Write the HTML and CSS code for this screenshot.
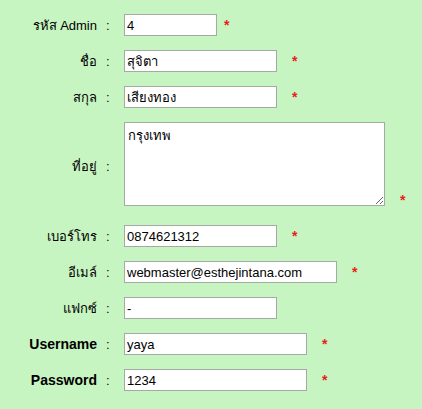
FILE: index.html
```html
<!DOCTYPE html>
<html>
<head>
<meta charset="utf-8">
<link rel="stylesheet" href="styles.css">
</head>
<body>
<form class="form">
  <div class="label">รหัส Admin</div><div class="colon">:</div>
  <div class="field"><input class="in w93" type="text" value="4"><span class="star star-near">*</span></div>

  <div class="label">ชื่อ</div><div class="colon">:</div>
  <div class="field"><input class="in w153" type="text" value="สุจิตา"><span class="star">*</span></div>

  <div class="label">สกุล</div><div class="colon">:</div>
  <div class="field"><input class="in w153" type="text" value="เสียงทอง"><span class="star">*</span></div>

  <div class="label">ที่อยู่</div><div class="colon">:</div>
  <div class="field field-area"><textarea class="area">กรุงเทพ</textarea><span class="star star-bottom">*</span></div>

  <div class="label">เบอร์โทร</div><div class="colon">:</div>
  <div class="field"><input class="in w153" type="text" value="0874621312"><span class="star">*</span></div>

  <div class="label">อีเมล์</div><div class="colon">:</div>
  <div class="field"><input class="in w213" type="text" value="webmaster@esthejintana.com"><span class="star">*</span></div>

  <div class="label">แฟกซ์</div><div class="colon">:</div>
  <div class="field"><input class="in w153" type="text" value="-"></div>

  <div class="label bold">Username</div><div class="colon">:</div>
  <div class="field"><input class="in w183" type="text" value="yaya"><span class="star">*</span></div>

  <div class="label bold">Password</div><div class="colon">:</div>
  <div class="field"><input class="in w183" type="text" value="1234"><span class="star">*</span></div>
</form>
</body>
</html>
```
FILE: styles.css
```css
html, body {
  margin: 0;
  padding: 0;
  background: #c7f5c1;
}
body {
  padding-top: 14px;
  font-family: "Liberation Sans", Arial, sans-serif;
  font-size: 13px;
  color: #000;
}
.form {
  display: grid;
  grid-template-columns: 97px 27px auto;
  grid-auto-rows: auto;
  row-gap: 14px;
  align-items: center;
}
.label {
  text-align: right;
  font-size: 13px;
  white-space: nowrap;
}
.bold {
  font-weight: bold;
  font-size: 14px;
}
.colon {
  padding-left: 9px;
}
.field {
  display: flex;
  align-items: center;
}
.field-area {
  align-items: flex-end;
  margin-bottom: 5px;
}
.in {
  box-sizing: border-box;
  height: 22px;
  margin: 0;
  padding: 1px 2px;
  border: 1px solid #a5aaa5;
  background: #fff;
  font-family: "Liberation Sans", Arial, sans-serif;
  font-size: 13px;
  color: #000;
  outline: none;
}
.w93 { width: 93px; }
.w153 { width: 153px; }
.w183 { width: 183px; }
.w213 { width: 213px; }
.area {
  box-sizing: border-box;
  width: 261px;
  height: 84px;
  margin: 0;
  padding: 2px 3px;
  border: 1px solid #a5aaa5;
  background: #fff;
  font-family: "Liberation Sans", Arial, sans-serif;
  font-size: 13px;
  color: #000;
  outline: none;
}
.star {
  color: #e8201c;
  font-weight: bold;
  font-size: 14px;
  line-height: 16px;
  margin-left: 15px;
}
.star-near {
  margin-left: 7px;
}
.star-bottom {
  margin-bottom: -2px;
}
```
